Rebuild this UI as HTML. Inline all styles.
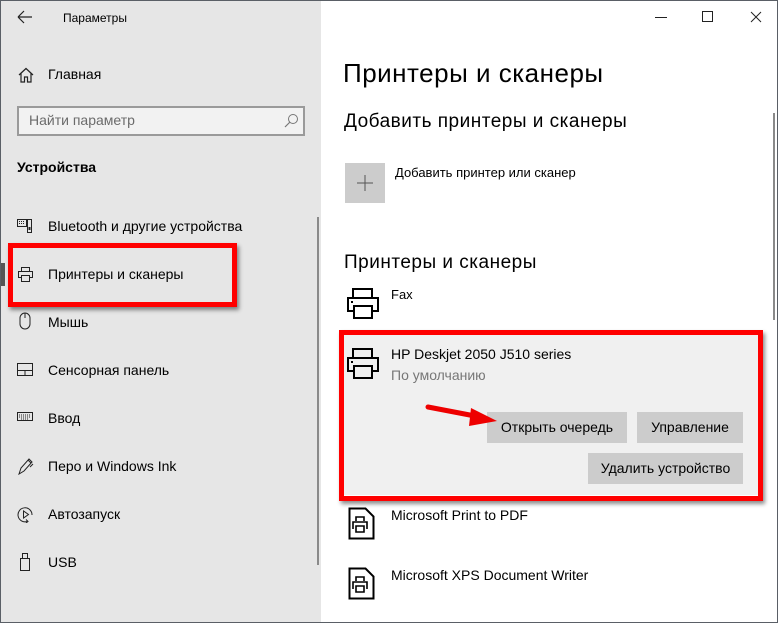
<!DOCTYPE html>
<html><head><meta charset="utf-8"><style>
*{margin:0;padding:0;box-sizing:border-box}
body{width:778px;height:623px;overflow:hidden;font-family:"Liberation Sans","DejaVu Sans",sans-serif;color:#000;position:relative;background:#fff}
.a{position:absolute;white-space:nowrap}
.side{position:absolute;left:0;top:0;width:321px;height:623px;background:#e6e6e6}
.nav{font-size:14px;left:48px}
.ic{position:absolute}
.btn{position:absolute;background:#cccccc;font-size:14px;text-align:center;line-height:31px}
</style></head><body>
<div class="side"></div>
<div class="a" style="left:0;top:0;width:778px;height:623px;border:1px solid #5a5f66;z-index:10"></div>

<svg class="ic" style="left:17px;top:10px" width="16" height="14"><path d="M1 7H15M1 7L7 1M1 7L7 13" stroke="#222" stroke-width="1.2" fill="none"/></svg>
<div class="a" style="left:63px;top:11px;font-size:12px">Параметры</div>

<svg class="ic" style="left:653px;top:10px" width="116" height="14"><path d="M2 7.5H14" stroke="#222"/><path d="M49.5 1.5h10v10h-10z" stroke="#222" fill="none"/><path d="M98 2L108 12M108 2L98 12" stroke="#222"/></svg>

<svg class="ic" style="left:18px;top:67px" width="16" height="16"><path d="M1 8L8 1.5L15 8M3 6.5V15H6.5V10H9.5V15H13V6.5" stroke="#222" stroke-width="1.2" fill="none"/></svg>
<div class="a nav" style="top:66px">Главная</div>

<div class="a" style="left:17px;top:106px;width:288px;height:30px;border:2px solid #9a9a9a;background:#f2f2f2"></div>
<div class="a" style="left:29px;top:112px;font-size:14px;color:#6b6b6b">Найти параметр</div>
<svg class="ic" style="left:283px;top:113px" width="16" height="16"><circle cx="10" cy="6" r="4.5" stroke="#777" fill="none"/><path d="M7 9L2 14" stroke="#777" stroke-width="1.2"/></svg>

<div class="a" style="left:17px;top:159px;font-size:14px;font-weight:bold">Устройства</div>
<div class="a" style="left:317px;top:217px;width:2px;height:348px;background:#8a8a8a"></div>

<svg class="ic" style="left:17px;top:218px" width="16" height="16"><rect x="0.5" y="1.5" width="9" height="7" fill="none" stroke="#222"/><path d="M2 3.5h5M2 5.5h5" stroke="#222" stroke-dasharray="1 1"/><rect x="10.5" y="1.5" width="4" height="13" fill="none" stroke="#222"/><rect x="11.5" y="9" width="2" height="3" fill="#222"/></svg>
<div class="a nav" style="top:218px">Bluetooth и другие устройства</div>

<div class="a" style="left:1px;top:263px;width:4px;height:23px;background:#555"></div>
<svg class="ic" style="left:17px;top:266px" width="17" height="17"><path d="M4.5 5V1.5h8V5M4.5 11.5H1.5V5.5h14v6h-3M4.5 9.5h8v6h-8z" stroke="#222" fill="none"/></svg>
<div class="a nav" style="top:266px">Принтеры и сканеры</div>
<div class="a" style="left:8px;top:243px;width:229px;height:64px;border:5px solid #f00;box-shadow:2px 3px 4px rgba(0,0,0,.45)"></div>

<svg class="ic" style="left:19px;top:312px" width="12" height="18"><rect x="1" y="1" width="10" height="16" rx="5" fill="none" stroke="#222"/><path d="M6 1v5" stroke="#222"/></svg>
<div class="a nav" style="top:314px">Мышь</div>
<svg class="ic" style="left:17px;top:363px" width="16" height="14"><rect x="0.5" y="0.5" width="15" height="12" fill="none" stroke="#222"/><path d="M0.5 7.5h15M8 7.5v5" stroke="#222"/></svg>
<div class="a nav" style="top:362px">Сенсорная панель</div>
<svg class="ic" style="left:17px;top:412px" width="16" height="10"><rect x="0.5" y="0.5" width="15" height="8" fill="none" stroke="#222"/><path d="M2 3h12M2 5h12M4 7h8" stroke="#222" stroke-dasharray="1 1"/></svg>
<div class="a nav" style="top:410px">Ввод</div>
<svg class="ic" style="left:17px;top:457px" width="17" height="18"><path d="M2 17L4 11L12 2L15 5L7 14ZM11 3l3 3M16 7l-3 3" stroke="#222" fill="none"/></svg>
<div class="a nav" style="top:458px">Перо и Windows Ink</div>
<svg class="ic" style="left:17px;top:506px" width="17" height="17"><path d="M10 15.5A7 7 0 1 1 15 9" stroke="#222" fill="none"/><path d="M6.5 5v7l5-3.5z" stroke="#222" fill="none"/><path d="M9 13.5l2 2-2 1.5" stroke="#222" fill="none"/></svg>
<div class="a nav" style="top:506px">Автозапуск</div>
<svg class="ic" style="left:20px;top:553px" width="10" height="18"><rect x="2.5" y="0.5" width="5" height="5" fill="none" stroke="#222"/><rect x="0.5" y="5.5" width="9" height="12" fill="none" stroke="#222"/></svg>
<div class="a nav" style="top:554px">USB</div>

<!-- right -->
<div class="a" style="left:773px;top:113px;width:2px;height:207px;background:#8a8a8a"></div>
<div class="a" style="left:343px;top:58px;font-size:26px;letter-spacing:0.5px">Принтеры и сканеры</div>
<div class="a" style="left:344px;top:111px;font-size:19px;letter-spacing:0.5px">Добавить принтеры и сканеры</div>
<div class="a" style="left:345px;top:163px;width:40px;height:40px;background:#cccccc"></div>
<svg class="ic" style="left:356px;top:174px" width="18" height="18"><path d="M9 1v16M1 9h16" stroke="#555"/></svg>
<div class="a" style="left:395px;top:165px;font-size:13px">Добавить принтер или сканер</div>
<div class="a" style="left:344px;top:252px;font-size:19px;letter-spacing:0.5px">Принтеры и сканеры</div>

<svg class="ic" style="left:346px;top:287px" width="34" height="33"><path d="M7 10V2h19v8M8 24H2V11h30v13h-6M8 19h18v12H8z" stroke="#000" stroke-width="2" fill="none"/><rect x="5" y="14" width="2" height="2" fill="#000"/></svg>
<div class="a" style="left:391px;top:287px;font-size:13px">Fax</div>

<div class="a" style="left:344px;top:335px;width:414px;height:160px;background:#f0f0f0"></div>
<svg class="ic" style="left:346px;top:347px" width="34" height="33"><path d="M7 10V2h19v8M8 24H2V11h30v13h-6M8 19h18v12H8z" stroke="#000" stroke-width="2" fill="none"/><rect x="5" y="14" width="2" height="2" fill="#000"/></svg>
<div class="a" style="left:391px;top:346px;font-size:14px">HP Deskjet 2050 J510 series</div>
<div class="a" style="left:391px;top:367px;font-size:14px;color:#777">По умолчанию</div>
<div class="btn" style="left:487px;top:412px;width:140px">Открыть очередь</div>
<div class="btn" style="left:637px;top:412px;width:106px">Управление</div>
<div class="btn" style="left:588px;top:453px;width:155px">Удалить устройство</div>
<div class="a" style="left:339px;top:330px;width:424px;height:171px;border:5px solid #f00;box-shadow:2px 3px 4px rgba(0,0,0,.45)"></div>
<svg class="ic" style="left:425px;top:400px" width="80" height="30"><path d="M3 7L50 16" stroke="#e00" stroke-width="5" stroke-linecap="round"/><path d="M46 8L72 21L44 26Z" fill="#e00"/></svg>

<svg class="ic" style="left:348px;top:507px" width="28" height="33"><path d="M1.5 1.5h16l8 8v22h-24z" stroke="#000" stroke-width="2" fill="none"/><path d="M8 14v-4h8v4M5 22V15h14v7M8 19h8v6H8z" stroke="#000" stroke-width="1.6" fill="none"/></svg>
<div class="a" style="left:391px;top:507px;font-size:14px">Microsoft Print to PDF</div>
<svg class="ic" style="left:348px;top:567px" width="28" height="33"><path d="M1.5 1.5h16l8 8v22h-24z" stroke="#000" stroke-width="2" fill="none"/><path d="M8 14v-4h8v4M5 22V15h14v7M8 19h8v6H8z" stroke="#000" stroke-width="1.6" fill="none"/></svg>
<div class="a" style="left:391px;top:567px;font-size:14px">Microsoft XPS Document Writer</div>
</body></html>
